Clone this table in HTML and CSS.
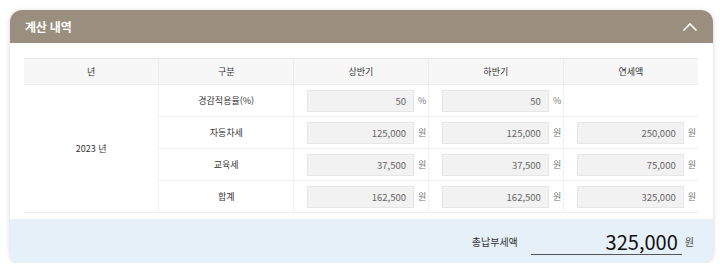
FILE: index.html
```html
<!DOCTYPE html>
<html lang="ko">
<head>
<meta charset="utf-8">
<link rel="stylesheet" href="styles.css">
</head>
<body>
<section class="card">
  <header class="card-head">
    <h2 class="card-title">계산 내역</h2>
    <svg class="chev" width="16" height="10" viewBox="0 0 16 10"><path d="M1.5 8.5 L8 2 L14.5 8.5" fill="none" stroke="#fff" stroke-width="1.6"/></svg>
  </header>
  <div class="card-body">
    <table class="calc">
      <thead>
        <tr><th>년</th><th>구분</th><th>상반기</th><th>하반기</th><th>연세액</th></tr>
      </thead>
      <tbody>
        <tr>
          <td rowspan="4" class="year">2023 년</td>
          <td>경감적용율(%)</td>
          <td><div class="fld"><span class="inp">50</span><span class="unit">%</span></div></td>
          <td><div class="fld"><span class="inp">50</span><span class="unit">%</span></div></td>
          <td></td>
        </tr>
        <tr>
          <td>자동차세</td>
          <td><div class="fld"><span class="inp">125,000</span><span class="unit">원</span></div></td>
          <td><div class="fld"><span class="inp">125,000</span><span class="unit">원</span></div></td>
          <td><div class="fld"><span class="inp">250,000</span><span class="unit">원</span></div></td>
        </tr>
        <tr>
          <td>교육세</td>
          <td><div class="fld"><span class="inp">37,500</span><span class="unit">원</span></div></td>
          <td><div class="fld"><span class="inp">37,500</span><span class="unit">원</span></div></td>
          <td><div class="fld"><span class="inp">75,000</span><span class="unit">원</span></div></td>
        </tr>
        <tr>
          <td>합계</td>
          <td><div class="fld"><span class="inp">162,500</span><span class="unit">원</span></div></td>
          <td><div class="fld"><span class="inp">162,500</span><span class="unit">원</span></div></td>
          <td><div class="fld"><span class="inp">325,000</span><span class="unit">원</span></div></td>
        </tr>
      </tbody>
    </table>
  </div>
  <footer class="card-foot">
    <span class="total-label">총납부세액</span>
    <span class="total-val">325,000</span>
    <span class="total-unit">원</span>
  </footer>
</section>
</body>
</html>
```

FILE: styles.css
```css
* { box-sizing: border-box; }
html, body { margin: 0; background: #fff; }
body {
  font-family: "Noto Sans CJK KR", "Noto Sans", sans-serif;
  color: #333;
  padding: 10px 7px 0 10px;
}
.card {
  width: 703px;
  height: 253px;
  border-radius: 12px;
  background: #fff;
  box-shadow: 0 1px 5px rgba(0,0,0,0.18);
  overflow: hidden;
  display: flex;
  flex-direction: column;
}
.card-head {
  height: 33px;
  flex: none;
  background: #9a8f7e;
  display: flex;
  align-items: center;
  justify-content: space-between;
  padding: 0 15px 0 15px;
}
.card-title {
  margin: 0;
  font-size: 12px;
  font-weight: 700;
  color: #fff;
  letter-spacing: -0.2px;
}
.card-body {
  flex: none;
  padding: 15px 15px 0 14px;
  height: 176px;
}
.calc {
  width: 674px;
  table-layout: fixed;
  border-collapse: collapse;
  font-size: 9px;
}
.calc th {
  height: 26px;
  background: #f7f7f7;
  border-top: 1px solid #e6e6e6;
  border-bottom: 1px solid #ececec;
  border-left: 1px solid #ececec;
  font-weight: 400;
  color: #333;
  padding: 0;
}
.calc th:first-child, .calc td.year { border-left: 0; }
.calc td {
  height: 32px;
  padding: 0;
  text-align: center;
  border-bottom: 1px solid #f1f1f1;
  border-left: 1px solid #f1f1f1;
  color: #333;
}
.calc tbody tr:last-child td, .calc td.year { border-bottom: 1px solid #ececec; }
.fld {
  display: flex;
  align-items: center;
  padding-left: 13px;
}
.inp {
  width: 107px;
  height: 22px;
  background: #f2f2f2;
  border: 1px solid #e6e6e6;
  text-align: right;
  padding-right: 7px;
  line-height: 20px;
  color: #666;
  font-size: 9.5px;
}
.unit {
  margin-left: 4px;
  color: #777;
  font-size: 9px;
}
.card-foot {
  flex: 1;
  background: #e6f0f8;
  display: flex;
  align-items: center;
  justify-content: flex-end;
  padding: 0 19px 0 0;
}
.total-label {
  font-size: 10px;
  color: #333;
  margin-right: 13px;
}
.total-val {
  width: 151px;
  text-align: right;
  font-size: 20px;
  color: #111;
  line-height: 24px;
  padding-right: 4px;
  border-bottom: 1px solid #555;
  margin-top: 2px;
}
.total-unit {
  margin-left: 3px;
  font-size: 10px;
  color: #444;
}
```
